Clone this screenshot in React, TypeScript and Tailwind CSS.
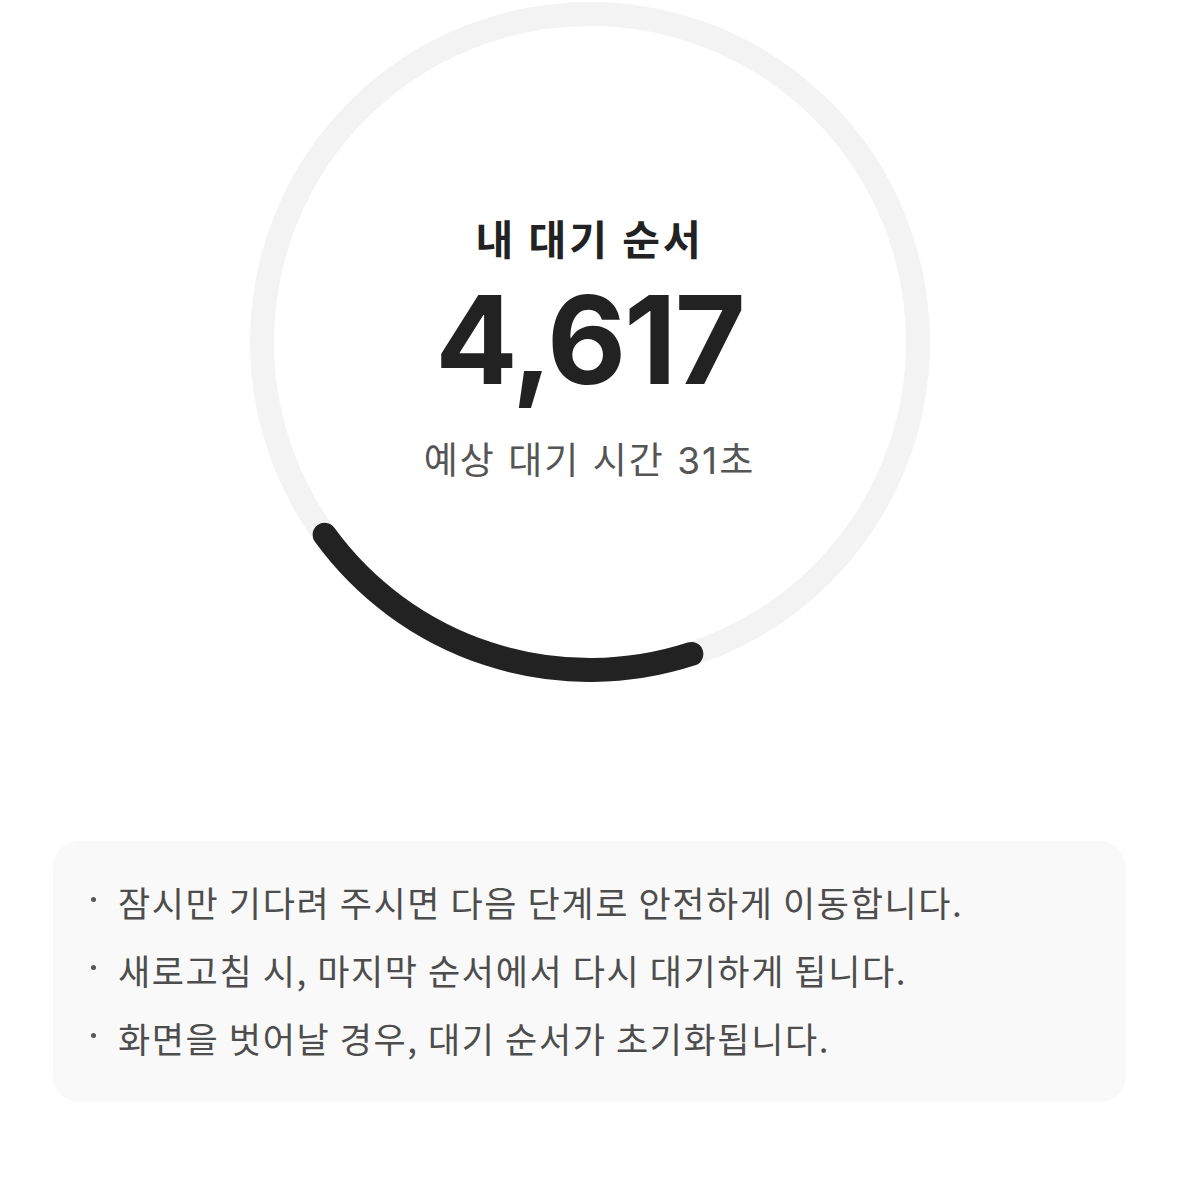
import React from 'react'

// Queue position ring: light track with a dark progress arc
function ProgressRing({ from, to }: { from: number; to: number }) {
  const c = 340
  const r = 328
  const pt = (deg: number) => {
    const a = (deg * Math.PI) / 180
    return `${(c + r * Math.cos(a)).toFixed(2)} ${(c + r * Math.sin(a)).toFixed(2)}`
  }
  const large = to - from > 180 ? 1 : 0
  return (
    <svg width={680} height={680} viewBox="0 0 680 680" className="col-start-1 row-start-1">
      <circle cx={c} cy={c} r={r} fill="none" stroke="#f3f3f3" strokeWidth={24} />
      <path
        d={`M ${pt(to)} A ${r} ${r} 0 ${large} 0 ${pt(from)}`}
        fill="none"
        stroke="#222222"
        strokeWidth={24}
        strokeLinecap="round"
      />
    </svg>
  )
}

const notices = [
  '잠시만 기다려 주시면 다음 단계로 안전하게 이동합니다.',
  '새로고침 시, 마지막 순서에서 다시 대기하게 됩니다.',
  '화면을 벗어날 경우, 대기 순서가 초기화됩니다.',
]

export default function App() {
  return (
    <div className="min-h-[1180px] w-full bg-white flex flex-col items-center font-['Noto_Sans_CJK_KR',sans-serif]">
      <div className="mt-[2px] grid w-[680px] h-[680px]">
        <ProgressRing from={72} to={144} />
        <div className="col-start-1 row-start-1 flex flex-col items-center pt-[211px]">
          <h2 className="text-[41px] leading-[48px] font-bold text-[#222] tracking-[3px]">내 대기 순서</h2>
          <p className="mt-[18px] text-[122px] leading-none font-bold text-[#222] tracking-[-2px] font-['Inter','Noto_Sans_CJK_KR',sans-serif]">
            4,617
          </p>
          <p className="mt-[38px] text-[37px] leading-[44px] text-[#555] tracking-[2px] font-['Inter','Noto_Sans_CJK_KR',sans-serif]">
            예상 대기 시간 31초
          </p>
        </div>
      </div>

      <div className="mt-[159px] w-[1073px] rounded-[26px] bg-[#f9f9f9] pl-[38px] pr-8 pt-[27px] pb-[30px]">
        <ul className="flex flex-col">
          {notices.map((text) => (
            <li key={text} className="flex items-start text-[35px] leading-[68px] text-[#4d4d4d] tracking-[1.6px]">
              <span className="mt-[29px] w-[5px] h-[5px] rounded-full bg-[#555] shrink-0" />
              <span className="ml-[22px]">{text}</span>
            </li>
          ))}
        </ul>
      </div>
    </div>
  )
}
